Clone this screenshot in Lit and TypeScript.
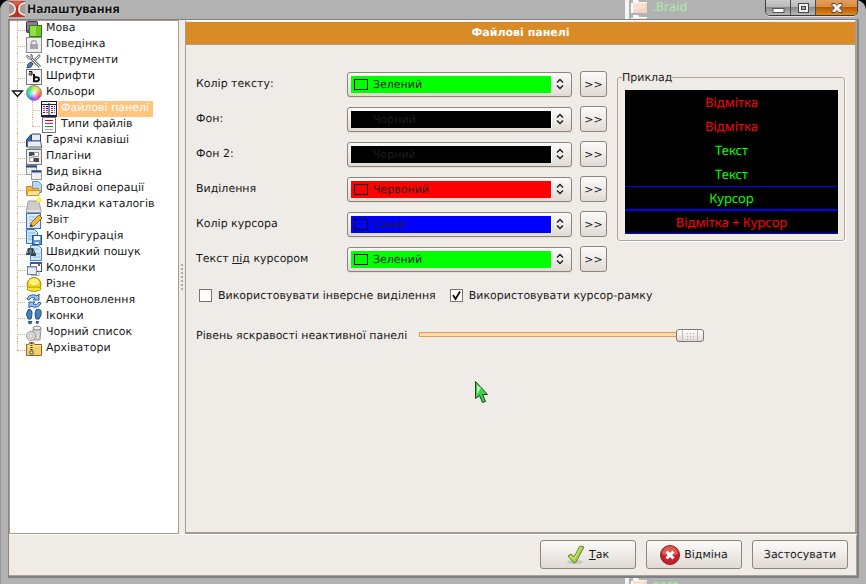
import { LitElement, html, css, svg, nothing, TemplateResult, SVGTemplateResult } from "lit";
import { customElement, property, state } from "lit/decorators.js";
import { classMap } from "lit/directives/class-map.js";
import { styleMap } from "lit/directives/style-map.js";

const glyphs: Record<string, SVGTemplateResult> = {
  language: svg`<rect x=".5" y=".5" width="11" height="11" rx="1" fill="#6b4a7c" stroke="#453050"/><path d="M1 1h10v5L1 9z" fill="#9377a3"/><rect x="3.500" y="4.500" width="12" height="11" fill="#6fc81f" stroke="#2f7c0c"/><path d="M4 5h6v10H4z" fill="#92df45"/>`,
  lock: svg`<rect x=".5" y=".5" width="15" height="15" fill="#eee" stroke="#8a8a8a"/><path d="M5.500 8V6a2.500 2.500 0 0 1 5 0v2" fill="none" stroke="#aaa" stroke-width="1.500"/><rect x="4" y="7" width="8" height="5" fill="#a4a4a4"/>`,
  tools: svg`<path d="M14 2 3 13" stroke="#7f8487" stroke-width="2.500"/><path d="m13 3-8 8" stroke="#e8ecee"/><path d="m5 5 9 9" stroke="#777" stroke-width="3"/><path d="m5 5 9 9" stroke="#eee"/><path d="M1 2c-1 3 2 5 4 4s2-4 0-5v3H3z" fill="#ddd" stroke="#777"/><path d="m1 15 1-4 3-2 2 2-2 3z" fill="#4f79b5" stroke="#294d80"/>`,
  fonts: svg`<rect x=".5" y=".5" width="15" height="15" fill="#f3f3f3" stroke="#777"/><path d="M3 2.500h3V6H4q-1 0-1-1t1-1h2" fill="none" stroke="#111"/><path d="M8 5v8m0-4.500q5-1 5 1.700t-5 2" fill="none" stroke="#111" stroke-width="2"/>`,
  panels: svg`<rect x=".5" y=".5" width="15" height="15" fill="#f4f5fb" stroke="#1b1c35"/><path d="M8 1v14M1 3.500h14M0 14.500h16" stroke="#22243d"/><path d="M1 1.500h14" stroke="#fff"/><path d="M2 5.500h2m6 0h2" stroke="#e00"/><path d="M2 7.500h2m6 0h2" stroke="#d0f"/><path d="M2 9.500h2m6 0h2" stroke="#0b2"/><path d="M2 11.500h2m6 0h2" stroke="#334"/><path d="M5 5.500h2m6 0h1M5 7.500h2m6 0h1" stroke="#30e"/><path d="M5 9.500h2m6 0h1M5 11.500h2m6 0h1" stroke="#e44"/>`,
  types: svg`<rect x="1.500" y=".5" width="13" height="15" fill="#fff" stroke="#777"/><path d="M4 3.500h8" stroke="#d00"/><path d="M4 6.500h8" stroke="#e0e"/><path d="M4 9.500h8" stroke="#0a0"/><path d="M4 12.500h8" stroke="#aaa"/>`,
  hotkeys: svg`<path d="M.5 14V7l4-5h5v5" fill="#3c65a5" stroke="#163a77"/><path d="M5.500 8V2q0-1 1-1h7q1 0 1 1v6z" fill="#e7e9ec" stroke="#1e3f78"/><path d="M1.500 14V9q0-1 1-1h12l1 5v2h-13z" fill="#eee" stroke="#43638f"/><path d="M3 13.500h12" stroke="#aaa"/>`,
  plugins: svg`<rect x=".5" y=".5" width="15" height="15" fill="#eee" stroke="#777"/><path d="M8.500 3.500h4v4h-4zM3.500 8.500h4v4h-4z" fill="#fff" stroke="#999"/><path d="M3 3h5v4H3zM8 9h5v4H8z" fill="#454b50"/><path d="M6 6h3v3H6z" fill="#b4b8ba"/>`,
  windows: svg`<rect x=".5" y=".5" width="10" height="9" fill="#eee" stroke="#999"/><path d="M0 1.500h11" stroke="#244a86" stroke-width="2"/><rect x="5.500" y="5.500" width="10" height="9" fill="#eee" stroke="#999"/><path d="M6 6.500h9" stroke="#244a86" stroke-width="2"/>`,
  operations: svg`<path d="M6.500.5h6l3 3v8h-9z" fill="#b6d7f6" stroke="#6691c5"/><path d="M.5 14.500v-9h5l1 2h6v7z" fill="#f0b940" stroke="#c98818"/><path d="m.5 14.500 2-5h12l-2 5z" fill="#fde49b" stroke="#cf9429"/>`,
  tabs: svg`<path d="M.5 13.500 2 5q0-1 1-1h9q1 0 1 1l2 8.500v2H.5z" fill="#ccc" stroke="#999"/><path d="M1 14h14" stroke="#f5f5f5"/><circle cx="13" cy="3" r="2.500" fill="#ffed24"/><path d="M10 3h6M13 0v6" stroke="#fff46c"/>`,
  report: svg`<rect x=".5" y=".5" width="14" height="15" fill="#d4e9fb" stroke="#3d73b4"/><path d="M3 4h9M3 7h9M3 10h9" stroke="#98bfe4"/><path d="m4 14 1-4 8-8 3 3-8 8z" fill="#f4ba3f" stroke="#9a6817"/><path d="m4 14 1-3 2 2z" fill="#333"/>`,
  config: svg`<path d="M.5.5h8l3 3v11H.5z" fill="#cfe5fa" stroke="#3973b8"/><path d="M2 4h7M2 7h7M2 10h7" stroke="#80afe0"/><rect x="6.500" y="6.500" width="9" height="9" fill="#6097d2" stroke="#285892"/><path d="M8 7h6v4H8z" fill="#fff"/><path d="M9 13h4v2H9z" fill="#dce6f1"/>`,
  search: svg`<path d="M4.500.5h8l3 3v12h-11z" fill="#d1e8fb" stroke="#4580c2"/><path d="M7 4h5M7 12h7M9 9h5" stroke="#8bb8e6"/><path d="M0 9 2 3h2v7H0zM5 3h2l3 6v2H5z" fill="#37454e"/><path d="M3 5h3v3H3z" fill="#65747e"/><path d="M1 7h1m5 0h1" stroke="#fff"/>`,
  columns: svg`<rect x="4.500" y="1.500" width="11" height="9" fill="#fff" stroke="#2d4d91"/><path d="M4 2h12" stroke="#35599d" stroke-width="2"/><path d="M12 3h2v2h-2z" fill="#d33"/><rect x="1.500" y="5.500" width="9" height="8" fill="#e8ebf2" stroke="#6f83ad"/><path d="M1 6h10" stroke="#6884b5"/><path d="M5 14.500h8V9" fill="none" stroke="#aaa"/>`,
  helmet: svg`<circle cx="8" cy="7.500" r="7" fill="#ecd319" stroke="#a18400"/><ellipse cx="8" cy="5" rx="5" ry="3.500" fill="#fff479"/><path d="M1.500 10.500q6.500-1 13 0v2.500q-6.500 3-13 0z" fill="#f6e139" stroke="#c2a200"/>`,
  refresh: svg`<path d="M1 6q2-5 8-4l2 1 2-2v6H7l2-2q-4-2-6 2zM15 10q-2 5-8 4l-2-1-2 2V9h6l-2 2q4 2 6-2z" fill="#9cc2e8" stroke="#285f9f"/>`,
  feet: svg`<path d="M2 1q3-2 4 2 0 4-1 7H2Q-1 5 2 1zM10 1q3-3 5 1 1 4-2 8h-3Q8 5 10 1z" fill="#4d82b9" stroke="#1c4f87"/><path d="M2 12h4q1 2-1 3-3 1-3-3zm8 0h3q0 3-2 3-2 0-1-3z" fill="#2d609b"/>`,
  trash: svg`<path d="m7 4 8-1-1 12H7z" fill="#c8c8c8" stroke="#999"/><ellipse cx="11" cy="3" rx="4" ry="2" fill="#eee" stroke="#888"/><path d="M9 6v8m3-8v8" stroke="#eee"/><circle cx="5" cy="11" r="4.500" fill="#ddd" stroke="#999"/><circle cx="5" cy="11" r="2" fill="#eee" stroke="#bbb"/>`,
  archive: svg`<path d="M.5 14.500v-11h2l1-2h4l1 2h7v11z" fill="#f3cf68" stroke="#91671a"/><path d="M1 5h14" stroke="#fff0b2"/><path d="M5.500 2v10" stroke="#333" stroke-width="2" stroke-dasharray="1 1"/><path d="M4 10h3v3H4z" fill="#eee" stroke="#555"/>`,
};

interface TreeEntry {
  label: string;
  icon: string;
  children?: TreeEntry[];
}

const entries: TreeEntry[] = [
  { label: "Мова", icon: "language" },
  { label: "Поведінка", icon: "lock" },
  { label: "Інструменти", icon: "tools" },
  { label: "Шрифти", icon: "fonts" },
  {
    label: "Кольори",
    icon: "wheel",
    children: [
      { label: "Файлові панелі", icon: "panels" },
      { label: "Типи файлів", icon: "types" },
    ],
  },
  { label: "Гарячі клавіші", icon: "hotkeys" },
  { label: "Плагіни", icon: "plugins" },
  { label: "Вид вікна", icon: "windows" },
  { label: "Файлові операції", icon: "operations" },
  { label: "Вкладки каталогів", icon: "tabs" },
  { label: "Звіт", icon: "report" },
  { label: "Конфігурація", icon: "config" },
  { label: "Швидкий пошук", icon: "search" },
  { label: "Колонки", icon: "columns" },
  { label: "Різне", icon: "helmet" },
  { label: "Автооновлення", icon: "refresh" },
  { label: "Іконки", icon: "feet" },
  { label: "Чорний список", icon: "trash" },
  { label: "Архіватори", icon: "archive" },
];

const palette: Record<string, string> = {
  Зелений: "#00ff00",
  Чорний: "#000000",
  Червоний: "#ff0000",
  Синій: "#0000ff",
};

@customElement("settings-tree")
export class SettingsTree extends LitElement {
  @state() private selected = "Файлові панелі";

  static styles = css`
    :host {
      display: block;
      background: #fff;
      border: 1px solid #a89a8c;
      overflow: hidden;
    }
    ul {
      list-style: none;
      margin: 0;
      padding: 0 0 0 16px;
    }
    ul ul {
      padding-left: 15px;
    }
    li {
      position: relative;
    }
    li::before {
      content: "";
      position: absolute;
      left: -9px;
      top: 0;
      bottom: 0;
      border-left: 1px dotted #d9b383;
    }
    li:last-child::before {
      bottom: auto;
      height: 9px;
    }
    li::after {
      content: "";
      position: absolute;
      left: -9px;
      top: 9px;
      width: 8px;
      border-top: 1px dotted #d9b383;
    }
    .item {
      display: flex;
      align-items: flex-start;
      height: 16px;
      padding: 0;
      border: 0;
      background: none;
      font: 11px/13px "DejaVu Sans", sans-serif;
      text-rendering: geometricPrecision;
      color: #1a1a1a;
      white-space: nowrap;
      text-align: left;
    }
    .icon {
      flex: none;
      width: 16px;
      height: 16px;
    }
    .wheel {
      border-radius: 50%;
      box-sizing: border-box;
      border: 1px solid #888;
      background: radial-gradient(#fff, #fff0 60%),
        conic-gradient(#b4f03c, #ffd45a, #ff8a3c, #ff4060, #f040e0, #7060ff, #30b0f0, #20e0a0, #40e050, #b4f03c);
    }
    .label {
      height: 16px;
      padding: 0 4px;
      box-sizing: border-box;
    }
    .current {
      background: #ffc47d;
      color: #fff;
      padding: 0 4px 0 3px;
      margin-left: 1px;
    }
    .arrow {
      position: absolute;
      left: -15px;
      top: 5px;
      z-index: 1;
      background: #fff;
    }
  `;

  private renderIcon(name: string): TemplateResult {
    return name === "wheel"
      ? html`<span class="icon wheel"></span>`
      : html`<svg class="icon" viewBox="0 0 16 16" aria-hidden="true">${glyphs[name]}</svg>`;
  }

  private renderEntry(entry: TreeEntry): TemplateResult {
    return html`<li>
      ${entry.children
        ? html`<svg class="arrow" width="13" height="8" viewBox="0 0 13 8"><path d="M1.500 1h10L6.500 6.500z" fill="#fff" stroke="#111" stroke-width="1.300"/></svg>`
        : nothing}
      <button class="item" @click=${() => (this.selected = entry.label)}>
        ${this.renderIcon(entry.icon)}
        <span class=${classMap({ label: true, current: this.selected === entry.label })}>${entry.label}</span>
      </button>
      ${entry.children ? html`<ul>${entry.children.map((c) => this.renderEntry(c))}</ul>` : nothing}
    </li>`;
  }

  render() {
    return html`<ul>${entries.map((e) => this.renderEntry(e))}</ul>`;
  }
}

@customElement("color-row")
export class ColorRow extends LitElement {
  @property() label: unknown = "";
  @property() value = "Чорний";

  static styles = css`
    :host {
      display: block;
    }
    .row {
      display: grid;
      grid-template-columns: 151px minmax(120px, 1fr) 27px;
      align-items: center;
      height: 25px;
    }
    .caption {
      line-height: 13px;
      padding-bottom: 2px;
    }
    .combo {
      position: relative;
      height: 25px;
      margin-right: 8px;
    }
    .select {
      appearance: none;
      box-sizing: border-box;
      width: 100%;
      height: 25px;
      padding: 0 24px 0 25px;
      border: 1px solid #8f8477;
      border-radius: 3px;
      background: linear-gradient(var(--fill), var(--fill)) 3px 3px / calc(100% - 23px) 17px no-repeat,
        linear-gradient(#fff, #fff) 3px 3px / calc(100% - 22px) 17px no-repeat,
        linear-gradient(#fcfbfa, #e0dad5);
      font: inherit;
      text-rendering: inherit;
      color: #1e1e1e;
      box-shadow: 0 1px 0 #e2ddd7;
    }
    .swatch {
      position: absolute;
      left: 7px;
      top: 7px;
      width: 12px;
      height: 9px;
      border: 1px solid #000;
      pointer-events: none;
    }
    .arrows {
      position: absolute;
      right: 7px;
      top: 6px;
      pointer-events: none;
    }
    .more {
      height: 26px;
      padding: 0;
      border: 1px solid #8f8477;
      border-radius: 3px;
      background: linear-gradient(#fcfbfa, #e0dad5);
      font: inherit;
      color: #1a1a1a;
    }
  `;

  private pick(e: Event) {
    this.value = (e.target as HTMLSelectElement).value;
  }

  render() {
    return html`<div class="row">
      <label class="caption" for="pick">${this.label}</label>
      <div class="combo" style=${styleMap({ "--fill": palette[this.value] })}>
        <select class="select" id="pick" @change=${this.pick}>
          ${Object.keys(palette).map((c) => html`<option ?selected=${c === this.value}>${c}</option>`)}
        </select>
        <span class="swatch"></span>
        <svg class="arrows" width="10" height="12" viewBox="0 0 10 12"><path d="M2 4.500 5 1.500l3 3M2 7.500l3 3 3-3" fill="none" stroke="#222" stroke-width="1.500"/></svg>
      </div>
      <button class="more">&gt;&gt;</button>
    </div>`;
  }
}

@customElement("app-root")
export class AppRoot extends LitElement {
  static styles = css`
    :host {
      display: flex;
      flex-direction: column;
      position: relative;
      box-sizing: border-box;
      min-height: 100vh;
      padding: 0 7px 6px 8px;
      overflow: hidden;
      background: #b2b2b2;
      border-radius: 10px 10px 0 0;
      box-shadow: inset 1px 0 0 #999, 0 0 0 12px #000;
      font: 11px/13px "DejaVu Sans", sans-serif;
      text-rendering: geometricPrecision;
      color: #1a1a1a;
    }
    .titlebar {
      display: flex;
      align-items: flex-start;
      height: 19px;
      position: relative;
      z-index: 1;
    }
    .logo {
      margin: 1px 2px 0 1px;
    }
    .title {
      flex: 1;
      margin: 0;
      font: bold 12px/17px "Noto Sans", sans-serif;
      color: #111;
      text-shadow: 0 0 2px #ddd;
    }
    .controls {
      display: flex;
      height: 16px;
      width: 93px;
      box-sizing: border-box;
      border: 1px solid #3c3c3c;
      border-top: 0;
      border-radius: 0 0 5px 5px;
      overflow: hidden;
      margin-right: 1px;
      box-shadow: 0 1px 0 #ddd;
    }
    .control {
      display: grid;
      place-items: center;
      width: 25px;
      padding: 0;
      border: 0;
      border-right: 1px solid #4c4c4c;
      background: linear-gradient(#ccc, #b5b5b5 50%, #8b8b8b 50%, #b8b8b8);
    }
    .close {
      flex: 1;
      border-right: 0;
      background: linear-gradient(#e0a060, #d78b38 50%, #b85b00 50%, #dd8a20);
    }
    .behind {
      position: absolute;
      right: 90px;
      width: 151px;
      overflow: hidden;
      border-left: 4px solid #f4f4f4;
      box-sizing: border-box;
      font-size: 12px;
      line-height: 15px;
      color: #a9eda9;
    }
    .upper {
      top: 0;
      height: 19px;
    }
    .lower {
      bottom: 0;
      height: 6px;
    }
    .file {
      display: flex;
      gap: 4px;
      height: 15px;
      padding-left: 2px;
    }
    .body {
      flex: 1;
      display: flex;
      flex-direction: column;
      background: #efebe7;
      border: 1px solid #808080;
      border-left-color: #8d8680;
      border-width: 1px 2px 2px 1px;
      box-shadow: inset -1px -1px 0 #ae9e90;
      position: relative;
    }
    .split {
      flex: 1;
      display: grid;
      grid-template-columns: 170px 6px minmax(0, 1fr);
    }
    .grip {
      align-self: center;
      height: 28px;
      margin-left: 1px;
      background: radial-gradient(circle, #aaa 30%, #fff0 50%) 0 0 / 4px 4px;
    }
    .panel {
      border: 1px solid #a89a8c;
      border-top-color: #fff;
      border-bottom-width: 2px;
      margin-right: 1px;
    }
    .heading {
      margin: 1px 0 0;
      padding: 4px 0 5px;
      border-bottom: 1px solid #ae9e90;
      background: #d88b27;
      color: #fff;
      font-size: 11px;
      line-height: 13px;
      text-align: center;
    }
    .content {
      display: grid;
      grid-template-columns: minmax(0, 1fr) 228px;
      column-gap: 10px;
      padding: 26px 10px 0;
    }
    .rows {
      display: grid;
      gap: 10px;
    }
    .sample {
      align-self: start;
      margin: 0;
      padding: 6px 6px 6px 7px;
      border: 1px solid #b0a598;
      border-radius: 3px;
      box-shadow: 1px 1px 0 #fff;
      min-width: 0;
    }
    .legend {
      padding: 0;
      margin-left: -3px;
      color: #222;
    }
    .line {
      box-sizing: border-box;
      height: 24px;
      background: #000;
      color: #f00;
      border: 0 solid #00f;
      font: 13px/24px "Noto Sans", sans-serif;
      text-align: center;
    }
    .plain {
      color: #0f0;
    }
    .framed {
      border-width: 1px 0;
      line-height: 22px;
    }
    .checks {
      display: flex;
      gap: 14px;
      padding: 18px 0 0 13px;
    }
    .check {
      display: flex;
      gap: 6px;
    }
    .box {
      appearance: none;
      box-sizing: border-box;
      width: 13px;
      height: 13px;
      margin: 0;
      border: 1px solid #7d7369;
      background: #fff;
    }
    .box:checked {
      background: #fff
        url("data:image/svg+xml,%3Csvg xmlns='http://www.w3.org/2000/svg' viewBox='0 0 11 11'%3E%3Cpath d='M2 5l2.500 4L9 1.500' fill='none' stroke='%23111' stroke-width='1.800'/%3E%3C/svg%3E");
    }
    .level {
      display: flex;
      align-items: center;
      gap: 12px;
      padding: 26px 151px 0 10px;
    }
    .range {
      appearance: none;
      flex: 1;
      min-width: 0;
      height: 14px;
      margin: 0;
      background: linear-gradient(#ffd9a8, #ffd9a8) 1px 5px / calc(100% - 2px) 3px no-repeat,
        linear-gradient(#d9a058, #d9a058) 0 4px / 100% 5px no-repeat;
    }
    .range::-webkit-slider-thumb {
      appearance: none;
      box-sizing: border-box;
      width: 28px;
      height: 13px;
      border: 1px solid #81776c;
      border-radius: 3px;
      background: radial-gradient(circle, #aaa 25%, #fff0 45%) 0 0 / 3px 3px content-box,
        linear-gradient(90deg, #fff0 5px, #bbb 5px 6px, #fff0 6px 20px, #bbb 20px 21px, #fff0 21px),
        linear-gradient(#fff, #ddd8d2);
      padding: 2px 8px 0 9px;
    }
    .footer {
      display: flex;
      justify-content: flex-end;
      gap: 10px;
      padding: 5px 9px 7px;
      border-top: 1px solid #fff;
    }
    .action {
      display: flex;
      align-items: center;
      justify-content: center;
      gap: 4px;
      width: 96px;
      height: 29px;
      padding: 0;
      white-space: nowrap;
      border: 1px solid #8f8477;
      border-radius: 3px;
      background: linear-gradient(#fcfbfa, #e0dad5);
      font: inherit;
      text-rendering: inherit;
      color: #1a1a1a;
    }
    .symbol {
      flex: none;
    }
    .pointer {
      position: absolute;
      left: 474px;
      top: 380px;
      pointer-events: none;
    }
  `;

  private folder(): TemplateResult {
    return html`<svg width="17" height="15" viewBox="0 0 17 15"><path d="M0 3h2V0h5l1 2h8v11H0z" fill="#fff"/><path d="M2 3h14v10H2z" fill="#f5d3c2"/><path d="M2 3h12v5L2 11z" fill="#fae0d2"/></svg>`;
  }

  render() {
    return html`
      <div class="behind upper" aria-hidden="true">
        <div class="file">${this.folder()}<span>.Braid</span></div>
        <div class="file">${this.folder()}</div>
      </div>
      <div class="behind lower" aria-hidden="true">
        <div class="file">${this.folder()}<span>nero</span></div>
      </div>
      <header class="titlebar">
        <svg class="logo" width="16" height="16" viewBox="0 0 16 16">
          <rect width="16" height="16" rx="1" fill="#bd3022"/>
          <path d="M3 0h10L8 5z" fill="#de5a46"/>
          <path d="M0 2q6 1 6 6t-6 6M16 2q-6 1-6 6t6 6" fill="none" stroke="#f2e4df" stroke-width="2"/>
          <path d="M0 3q5 1 5 5t-5 5M16 3q-5 1-5 5t5 5" fill="#a09c9c"/>
        </svg>
        <h1 class="title">Налаштування</h1>
        <div class="controls">
          <button class="control" aria-label="Згорнути"><svg width="13" height="14" viewBox="0 0 13 14"><rect x="1" y="7.500" width="11" height="4" fill="#fff" stroke="#555"/></svg></button>
          <button class="control" aria-label="Розгорнути"><svg width="13" height="14" viewBox="0 0 13 14"><rect x="1.500" y="2.500" width="10" height="9" fill="#eee" stroke="#444"/><rect x="4.500" y="5.500" width="4" height="3" fill="#aaa" stroke="#444"/></svg></button>
          <button class="control close" aria-label="Закрити"><svg width="14" height="14" viewBox="0 0 14 14"><path d="M2 2.500h3l2 2 2-2h3v2L9.500 7l2.500 2.500v2H9l-2-2-2 2H2v-2L4.500 7 2 4.500z" fill="#f5f5f5" stroke="#4a4540"/></svg></button>
        </div>
      </header>
      <main class="body">
        <div class="split">
          <settings-tree></settings-tree>
          <div class="grip"></div>
          <section class="panel">
            <h2 class="heading">Файлові панелі</h2>
            <div class="content">
              <div class="rows">
                <color-row .label=${"Колір тексту:"} value="Зелений"></color-row>
                <color-row .label=${"Фон:"} value="Чорний"></color-row>
                <color-row .label=${"Фон 2:"} value="Чорний"></color-row>
                <color-row .label=${"Виділення"} value="Червоний"></color-row>
                <color-row .label=${"Колір курсора"} value="Синій"></color-row>
                <color-row .label=${html`Текст <u>під</u> курсором`} value="Зелений"></color-row>
              </div>
              <fieldset class="sample">
                <legend class="legend">Приклад</legend>
                <div class="line">Відмітка</div>
                <div class="line">Відмітка</div>
                <div class="line plain">Текст</div>
                <div class="line plain">Текст</div>
                <div class="line plain framed">Курсор</div>
                <div class="line framed">Відмітка + Курсор</div>
              </fieldset>
            </div>
            <div class="checks">
              <label class="check"><input class="box" type="checkbox" />Використовувати інверсне виділення</label>
              <label class="check"><input class="box" type="checkbox" checked />Використовувати курсор-рамку</label>
            </div>
            <div class="level">
              <label for="level">Рівень яскравості неактивної панелі</label>
              <input class="range" id="level" type="range" min="0" max="100" value="100" />
            </div>
          </section>
        </div>
        <footer class="footer">
          <button class="action">
            <svg class="symbol" width="18" height="20" viewBox="0 0 18 20"><ellipse cx="8" cy="17" rx="8" ry="2" fill="#ccc5bf"/><path d="m1 11 3-2 3 3 6-11 4 1-8 15-2 1z" fill="#a8cf45" stroke="#5d8a1b"/><path d="m3 11 4 3 7-12" fill="none" stroke="#d8ec94"/></svg>
            <span><u>Т</u>ак</span>
          </button>
          <button class="action">
            <svg class="symbol" width="20" height="20" viewBox="0 0 20 20"><circle cx="10" cy="10" r="9.500" fill="#c5202d" stroke="#8d1b2a"/><path d="M2 9a8 8 0 0 1 16 0q-8 4-16 0z" fill="#e2594c"/><path d="m6.500 6.500 7 7m0-7-7 7" stroke="#fff" stroke-width="3"/></svg>
            Відміна
          </button>
          <button class="action">Застосувати</button>
        </footer>
      </main>
      <svg class="pointer" width="14" height="24" viewBox="0 0 14 24"><path d="M1.500 1.500v17l4-3 3 7 3-1-3-7h5z" fill="#43cf4f" stroke="#0b4f16"/><path d="M3 5v9l4-6z" fill="#b4f5b2"/></svg>
    `;
  }
}
